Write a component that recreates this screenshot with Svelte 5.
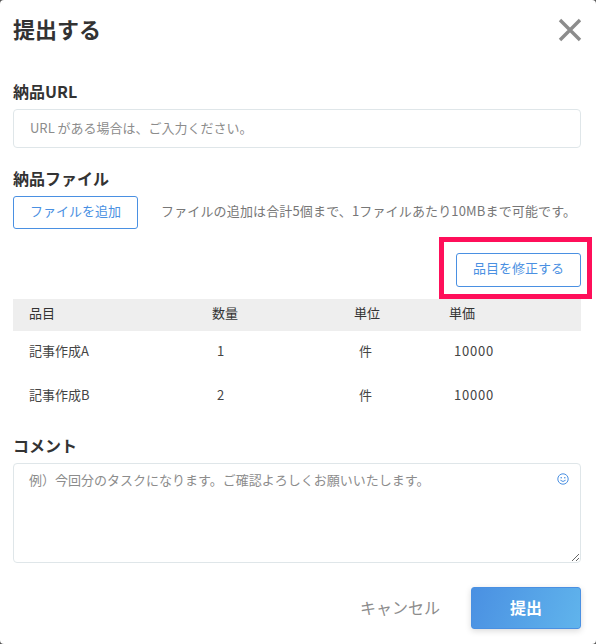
<script>
	let rows = [
		{ name: '記事作成A', qty: 1, unit: '件', price: 10000 },
		{ name: '記事作成B', qty: 2, unit: '件', price: 10000 }
	];
</script>

<div class="modal">
	<header class="modal__head">
		<h2>提出する</h2>
		<svg class="modal__close" viewBox="0 0 24 24" width="24" height="24" aria-hidden="true">
			<path d="M2 2 L22 22 M22 2 L2 22" stroke="#8c8c8c" stroke-width="3.4" fill="none" />
		</svg>
	</header>

	<label class="label label--url" for="url">納品URL</label>
	<input id="url" class="field" type="text" placeholder="URL がある場合は、ご入力ください。" />

	<div class="label label--file">納品ファイル</div>
	<div class="files">
		<button class="btn-outline">ファイルを追加</button>
		<span class="files__note">ファイルの追加は合計5個まで、1ファイルあたり10MBまで可能です。</span>
	</div>

	<div class="edit">
		<button class="btn-outline btn-outline--edit">品目を修正する</button>
		<span class="edit__mark"></span>
	</div>

	<div class="table">
		<div class="row row--head">
			<span>品目</span>
			<span>数量</span>
			<span>単位</span>
			<span>単価</span>
		</div>
		{#each rows as row (row.name)}
			<div class="row">
				<span>{row.name}</span>
				<span>{row.qty}</span>
				<span>{row.unit}</span>
				<span class="row__price">{row.price}</span>
			</div>
		{/each}
	</div>

	<label class="label label--comment" for="comment">コメント</label>
	<div class="comment">
		<textarea id="comment" placeholder="例）今回分のタスクになります。ご確認よろしくお願いいたします。"></textarea>
		<svg class="comment__smile" viewBox="0 0 12 12" width="12" height="12" aria-hidden="true">
			<circle cx="6" cy="6" r="5.2" fill="none" stroke="#4a90e2" stroke-width="1" />
			<circle cx="4.2" cy="4.8" r="0.8" fill="#4a90e2" />
			<circle cx="7.8" cy="4.8" r="0.8" fill="#4a90e2" />
			<path d="M3.4 7.2 Q6 9.8 8.6 7.2" fill="none" stroke="#4a90e2" stroke-width="1" />
		</svg>
	</div>

	<footer class="actions">
		<button class="btn-cancel">キャンセル</button>
		<button class="btn-submit">提出</button>
	</footer>
</div>

<style>
	:global(body) {
		background: #555;
	}

	.modal {
		position: relative;
		box-sizing: border-box;
		width: 596px;
		height: 644px;
		padding: 0 15px 0 13px;
		background: #fff;
		border-radius: 4px;
		color: #333;
		font-family: "Noto Sans CJK JP", "Noto Sans", sans-serif;
		overflow: hidden;
	}

	.modal__head {
		display: flex;
		justify-content: space-between;
		align-items: center;
		height: 60px;
	}

	h2 {
		margin: 0;
		padding-bottom: 4px;
		font-size: 22px;
		font-weight: 700;
		line-height: 56px;
	}

	.modal__close {
		margin-right: -1px;
	}

	.label {
		display: block;
		height: 24px;
		font-size: 16px;
		font-weight: 700;
		line-height: 22px;
	}

	.label--url {
		margin-top: 20px;
		margin-bottom: 5px;
	}

	.label--file {
		margin-top: 19px;
		margin-bottom: 5px;
	}

	.label--comment {
		margin-top: 15px;
		margin-bottom: 5px;
	}

	.field {
		display: block;
		box-sizing: border-box;
		width: 100%;
		height: 39px;
		padding: 0 16px 3px;
		border: 1px solid #dfe6e9;
		border-radius: 4px;
		font: inherit;
		font-size: 13px;
		outline: none;
	}

	.field::placeholder,
	textarea::placeholder {
		color: #8c8c8c;
		opacity: 1;
	}

	.files {
		display: flex;
		align-items: center;
		gap: 23px;
	}

	.files__note {
		padding-bottom: 4px;
		color: #777;
		font-size: 13px;
		letter-spacing: 0.15px;
		white-space: nowrap;
	}

	.btn-outline {
		box-sizing: border-box;
		width: 125px;
		height: 33px;
		padding: 0 0 4px;
		background: #fff;
		border: 1px solid #4a90e2;
		border-radius: 3px;
		color: #4a90e2;
		font: inherit;
		font-size: 13px;
	}

	.edit {
		position: relative;
		display: flex;
		justify-content: flex-end;
		margin-top: 24px;
		height: 46px;
	}

	.btn-outline--edit {
		height: 34px;
		padding-bottom: 5px;
	}

	.edit__mark {
		position: absolute;
		top: -16px;
		right: -11px;
		box-sizing: border-box;
		width: 153px;
		height: 62px;
		border: 5px solid #ff0f5a;
	}

	.row {
		display: grid;
		grid-template-columns: 183px 142px 95px 1fr;
		align-items: center;
		box-sizing: border-box;
		height: 44px;
		padding: 0 0 6px 16px;
		font-size: 13px;
		color: #444;
	}

	.row span:not(:first-child) {
		padding-left: 5px;
	}

	.row .row__price {
		letter-spacing: 0.8px;
	}

	.row--head {
		height: 32px;
		background: #eee;
		color: #333;
	}

	.row--head span:not(:first-child) {
		padding-left: 0;
	}

	.comment {
		position: relative;
	}

	textarea {
		display: block;
		box-sizing: border-box;
		width: 100%;
		height: 100px;
		padding: 6px 15px;
		border: 1px solid #dfe6e9;
		border-radius: 4px;
		font: inherit;
		font-size: 13px;
		outline: none;
	}

	.comment__smile {
		position: absolute;
		top: 10px;
		right: 12px;
	}

	.actions {
		display: flex;
		justify-content: flex-end;
		align-items: center;
		gap: 31px;
		margin-top: 24px;
	}

	.btn-cancel {
		padding: 0 0 2px;
		background: none;
		border: 0;
		color: #8c8c8c;
		font: inherit;
		font-size: 16px;
	}

	.btn-submit {
		width: 110px;
		height: 42px;
		padding: 0 0 3px;
		background: linear-gradient(110deg, #4a90e2, #60b4ec);
		border: 1px solid #4a90e2;
		border-radius: 3px;
		box-shadow: 0 2px 6px rgba(0, 0, 0, 0.15);
		color: #fff;
		font: inherit;
		font-size: 16px;
		font-weight: 700;
	}
</style>
